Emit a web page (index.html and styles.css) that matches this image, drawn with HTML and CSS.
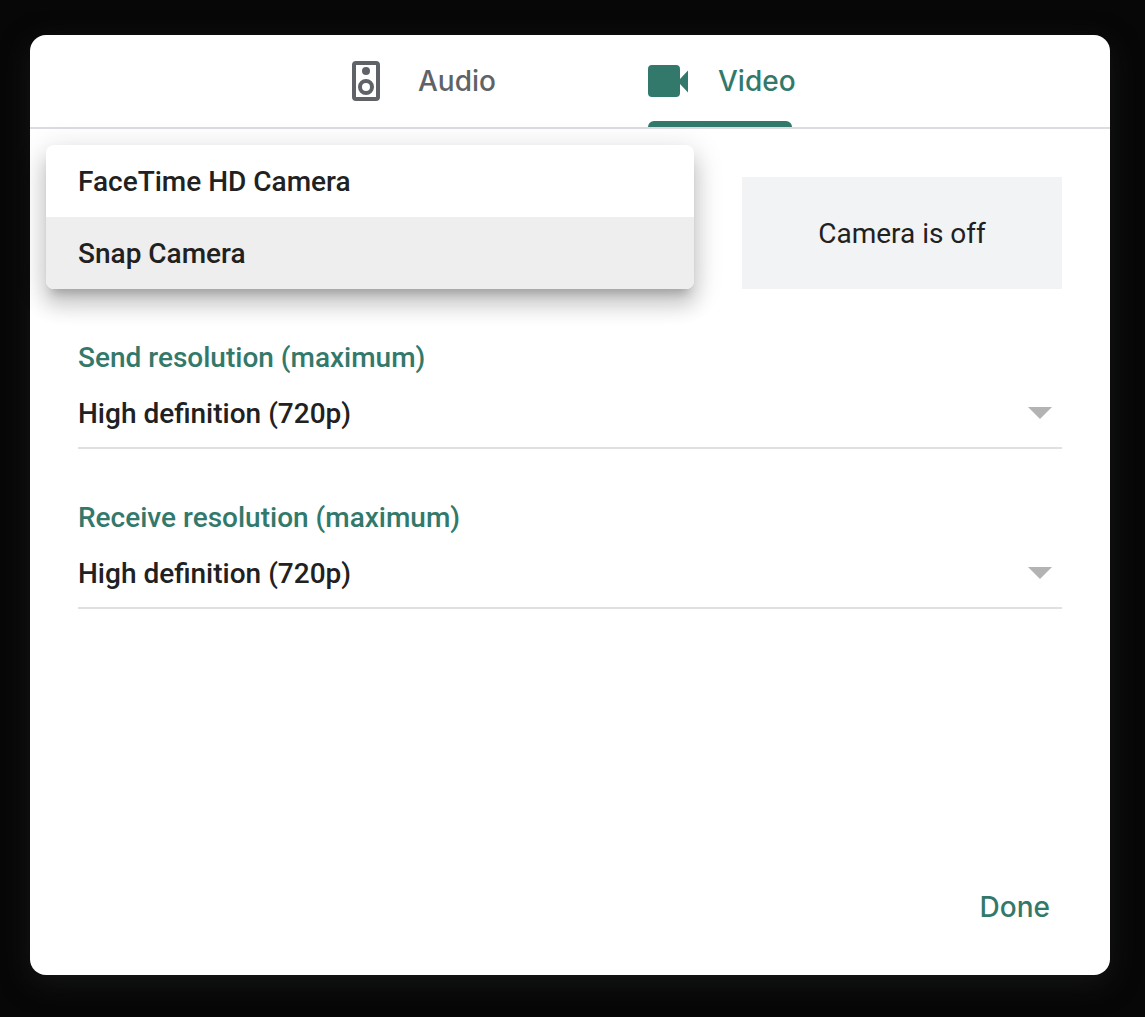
FILE: index.html
```html
<!DOCTYPE html>
<html lang="en">
<head>
<meta charset="utf-8">
<meta name="viewport" content="width=device-width, initial-scale=1">
<title>Settings</title>
<link rel="stylesheet" href="styles.css">
</head>
<body>
<main class="dialog">
  <div class="tabs" role="tablist">
    <button class="tab" type="button" role="tab" aria-selected="false">
      <svg class="tab-icon" viewBox="0 0 40 40" aria-hidden="true">
        <rect x="6" y="2" width="24" height="36" rx="2" fill="none" stroke="currentColor" stroke-width="4"/>
        <circle cx="18" cy="10" r="4" fill="currentColor"/>
        <circle cx="18" cy="26" r="6" fill="none" stroke="currentColor" stroke-width="4"/>
      </svg>
      <span>Audio</span>
    </button>
    <button class="tab tab-active" type="button" role="tab" aria-selected="true">
      <svg class="tab-icon" viewBox="0 0 40 40" aria-hidden="true">
        <path fill="currentColor" d="M4 4h24a4 4 0 0 1 4 4v10l8-8.500v22L32 23v9a4 4 0 0 1-4 4H4a4 4 0 0 1-4-4V8a4 4 0 0 1 4-4z"/>
      </svg>
      <span>Video</span>
    </button>
  </div>
  <form class="panel">
    <div class="camera-row">
      <div class="menu" role="listbox" aria-label="Camera">
        <button class="option" type="button" role="option" aria-selected="false">FaceTime HD Camera</button>
        <button class="option option-active" type="button" role="option" aria-selected="true">Snap Camera</button>
      </div>
      <div class="preview">Camera is off</div>
    </div>
    <div class="field">
      <label class="label" for="send">Send resolution (maximum)</label>
      <div class="select-wrap">
        <select class="select" id="send"><option>High definition (720p)</option></select>
        <svg class="arrow" viewBox="0 0 24 12" aria-hidden="true"><path fill="currentColor" d="M0 0h24L12 12z"/></svg>
      </div>
    </div>
    <div class="field">
      <label class="label" for="receive">Receive resolution (maximum)</label>
      <div class="select-wrap">
        <select class="select" id="receive"><option>High definition (720p)</option></select>
        <svg class="arrow" viewBox="0 0 24 12" aria-hidden="true"><path fill="currentColor" d="M0 0h24L12 12z"/></svg>
      </div>
    </div>
  </form>
  <div class="actions">
    <button class="done" type="button">Done</button>
  </div>
</main>
</body>
</html>
```
FILE: styles.css
```css
* {
  box-sizing: border-box;
}

body {
  margin: 0;
  min-height: 100vh;
  padding: 35px 35px 42px 30px;
  display: flex;
  background: #070707;
  color: #212121;
  font: 500 28px/42px Roboto, sans-serif;
}

button,
select {
  margin: 0;
  border: 0;
  background: none;
  color: inherit;
  font: inherit;
}

.dialog {
  flex: 1;
  display: flex;
  flex-direction: column;
  border-radius: 16px;
  background: #fff;
  box-shadow: 0 8px 28px #151616;
}

.tabs {
  display: flex;
  justify-content: center;
  border-bottom: 2px solid #dadce0;
}

.tab {
  position: relative;
  display: flex;
  align-items: center;
  gap: 30px;
  width: 300px;
  height: 92px;
  padding: 0 0 0 78px;
  color: #5f6368;
  font-family: Inter, sans-serif;
}

.tab-icon {
  width: 40px;
  height: 40px;
}

.tab-active {
  color: #33796b;
}

.tab-active::after {
  content: "";
  position: absolute;
  bottom: 0;
  left: 78px;
  width: 144px;
  height: 6px;
  border-radius: 6px 6px 0 0;
  background: currentColor;
}

.panel {
  flex: 1;
  padding: 48px;
}

.camera-row {
  display: grid;
  grid-template-columns: 1fr 320px;
  gap: 48px;
}

.menu {
  margin: -32px 0 0 -32px;
  border-radius: 8px;
  background: #fff;
  box-shadow: 0 10px 10px -6px rgba(0, 0, 0, .2), 0 16px 20px 2px rgba(0, 0, 0, .14), 0 6px 28px 4px rgba(0, 0, 0, .12);
  overflow: hidden;
}

.option {
  display: block;
  width: 100%;
  height: 72px;
  padding: 2px 32px 0;
  text-align: left;
}

.option-active {
  background: #eee;
}

.preview {
  display: flex;
  align-items: center;
  justify-content: center;
  padding-top: 2px;
  background: #f1f3f4;
  font-weight: 400;
}

.field {
  margin-top: 48px;
}

.label {
  display: block;
  color: #33796b;
}

.select-wrap {
  display: grid;
  align-items: center;
  border-bottom: 2px solid #e0e0e0;
}

.select,
.arrow {
  grid-area: 1 / 1;
}

.select {
  width: 100%;
  height: 68px;
  padding: 2px 0 0;
  appearance: none;
}

.arrow {
  justify-self: end;
  width: 24px;
  height: 12px;
  margin-right: 10px;
  color: #b3b3b3;
  pointer-events: none;
}

.actions {
  display: flex;
  justify-content: flex-end;
  padding: 0 48px 32px;
}

.done {
  height: 72px;
  padding: 0 12px;
  color: #33796b;
  font-family: Inter, sans-serif;
}
```
